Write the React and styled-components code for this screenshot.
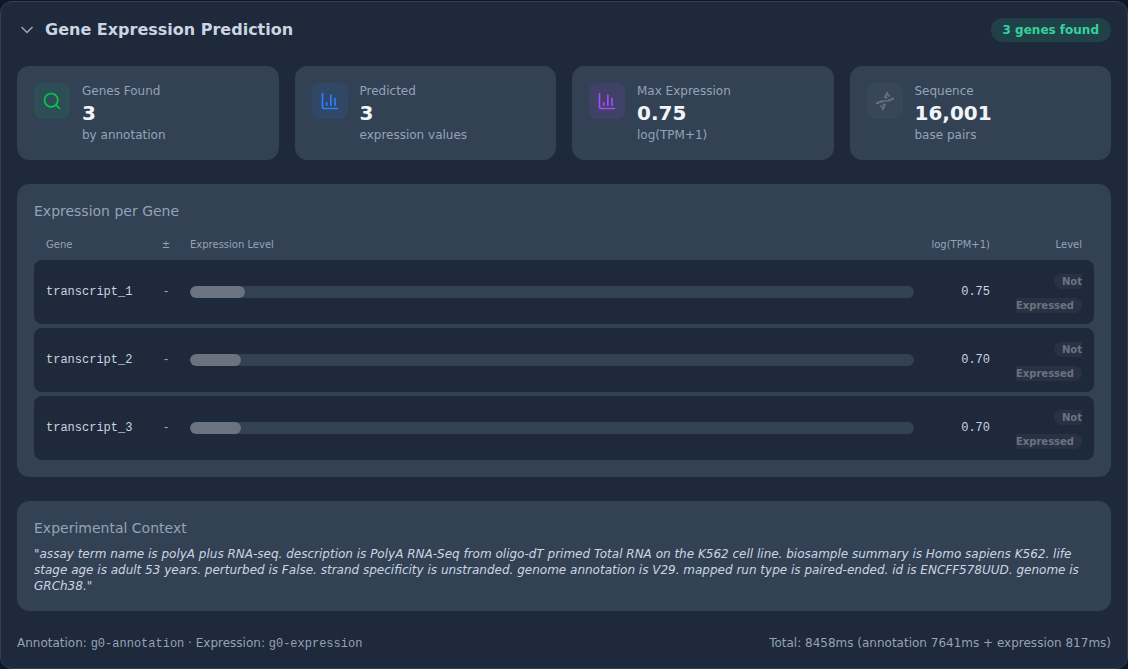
import React, { useState } from "react";
import styled, { createGlobalStyle } from "styled-components";
import { ChartColumn, ChevronDown, Dna, Search } from "lucide-react";

const GlobalStyle = createGlobalStyle`
  * {
    box-sizing: border-box;
  }
  body {
    margin: 0;
    background: #0f172a;
    color: #cbd5e1;
    font-family: "DejaVu Sans", sans-serif;
    font-size: 16px;
    line-height: 24px;
  }
`;

const Panel = styled.main`
  display: flex;
  flex-direction: column;
  gap: 24px;
  margin-top: 1px;
  padding: 16px;
  background: #1e293b;
  border: 1px solid #334155;
  border-radius: 12px;
`;

const Header = styled.header`
  display: flex;
  align-items: center;
  justify-content: space-between;
`;

const Title = styled.h1`
  margin: 0;
  font-size: 16px;
  line-height: 24px;
`;

const Toggle = styled.button`
  display: flex;
  align-items: center;
  gap: 8px;
  padding: 0;
  border: 0;
  background: none;
  color: #cbd5e1;
  font: inherit;
  font-weight: 600;
  cursor: pointer;
`;

const Chevron = styled(ChevronDown)`
  color: #94a3b8;
  transform: ${props => (props.$open ? "none" : "rotate(-90deg)")};
`;

const FoundBadge = styled.span`
  padding: 4px 12px;
  border-radius: 12px;
  background: rgba(52, 211, 153, 0.15);
  color: #34d399;
  font-size: 12px;
  font-weight: 600;
  line-height: 16px;
`;

const Stats = styled.div`
  display: grid;
  grid-template-columns: repeat(4, 1fr);
  gap: 16px;
`;

const Card = styled.section`
  padding: 16px;
  background: #334155;
  border: 1px solid #334155;
  border-radius: 12px;
`;

const StatCard = styled(Card)`
  display: flex;
  align-items: flex-start;
  gap: 12px;
`;

const IconBox = styled.div`
  display: flex;
  padding: 8px;
  border-radius: 8px;
  color: ${props => props.$color};
  background: ${props => props.$background};
`;

const StatText = styled.div`
  color: #94a3b8;
  font-size: 12px;
  line-height: 16px;
`;

const StatValue = styled.div`
  color: #f1f5f9;
  font-size: 20px;
  font-weight: 700;
  line-height: 28px;
`;

const CardTitle = styled.h2`
  margin: 0 0 ${props => props.$space}px;
  color: #94a3b8;
  font-size: 14px;
  font-weight: 400;
  line-height: 20px;
`;

const GeneTable = styled.table`
  display: flex;
  flex-direction: column;
  gap: 4px;
`;

const TableBody = styled.tbody`
  display: flex;
  flex-direction: column;
  gap: 4px;
`;

const Row = styled.tr`
  display: grid;
  grid-template-columns: 96px 24px 1fr 64px 80px;
  align-items: center;
  gap: 12px;
  padding: 8px 12px;
  border-radius: 8px;
  background: #1e293b;
`;

const HeadRow = styled(Row)`
  padding: 4px 12px;
  background: none;
`;

const HeadCell = styled.th`
  padding: 0;
  color: #94a3b8;
  font-size: 10px;
  font-weight: 400;
  line-height: 15px;
  text-align: ${props => props.$align || "left"};
`;

const Cell = styled.td`
  padding: 0;
  text-align: ${props => props.$align || "left"};
`;

const MonoCell = styled(Cell)`
  color: ${props => (props.$muted ? "#94a3b8" : "#cbd5e1")};
  font-family: "Liberation Mono", monospace;
  font-size: 12px;
  line-height: 16px;
`;

const Track = styled.div`
  height: 12px;
  border-radius: 6px;
  background: #334155;
  overflow: hidden;
`;

const Fill = styled.div`
  height: 100%;
  border-radius: 6px;
  background: #6b7280;
`;

const LevelBadge = styled.span`
  padding: 2px 8px;
  border-radius: 8px;
  background: rgba(107, 114, 128, 0.13);
  color: #6b7280;
  font-size: 10px;
  font-weight: 600;
  line-height: 15px;
`;

const Context = styled.p`
  margin: 0;
  font-size: 12px;
  font-style: italic;
  line-height: 16px;
`;

const Footer = styled.footer`
  display: flex;
  justify-content: space-between;
  color: #94a3b8;
  font-size: 12px;
  line-height: 16px;
`;

const Code = styled.span`
  font-family: "Liberation Mono", monospace;
`;

const stats = [
  { label: "Genes Found", value: "3", note: "by annotation", icon: Search, color: "#00c950", background: "rgba(0, 201, 80, 0.1)" },
  { label: "Predicted", value: "3", note: "expression values", icon: ChartColumn, color: "#2b7fff", background: "rgba(43, 127, 255, 0.1)" },
  { label: "Max Expression", value: "0.75", note: "log(TPM+1)", icon: ChartColumn, color: "#ad46ff", background: "rgba(173, 70, 255, 0.1)" },
  { label: "Sequence", value: "16,001", note: "base pairs", icon: Dna, color: "#6a7282", background: "rgba(106, 114, 130, 0.1)" }
];

const genes = [
  { id: "transcript_1", strand: "-", value: 0.754 },
  { id: "transcript_2", strand: "-", value: 0.7 },
  { id: "transcript_3", strand: "-", value: 0.7 }
];

// log(TPM+1) value that fills the whole bar
const MAX_LEVEL = 10;

const Stat = ({ label, value, note, icon: Icon, color, background }) => (
  <StatCard>
    <IconBox $color={color} $background={background}>
      <Icon size={20} />
    </IconBox>
    <StatText>
      <div>{label}</div>
      <StatValue>{value}</StatValue>
      <div>{note}</div>
    </StatText>
  </StatCard>
);

const GeneRow = ({ gene }) => (
  <Row>
    <MonoCell>{gene.id}</MonoCell>
    <MonoCell $align="center" $muted>{gene.strand}</MonoCell>
    <Cell>
      <Track>
        <Fill style={{ width: `${(gene.value / MAX_LEVEL) * 100}%` }} />
      </Track>
    </Cell>
    <MonoCell $align="right">{gene.value.toFixed(2)}</MonoCell>
    <Cell $align="right">
      <LevelBadge>Not Expressed</LevelBadge>
    </Cell>
  </Row>
);

export default function App() {
  const [open, setOpen] = useState(true);

  return (
    <>
      <GlobalStyle />
      <Panel>
        <Header>
          <Title>
            <Toggle aria-expanded={open} onClick={() => setOpen(!open)}>
              <Chevron size={20} $open={open} />
              Gene Expression Prediction
            </Toggle>
          </Title>
          <FoundBadge>3 genes found</FoundBadge>
        </Header>
        {open && (
          <>
            <Stats>
              {stats.map(stat => <Stat key={stat.label} {...stat} />)}
            </Stats>
            <Card>
              <CardTitle $space={12}>Expression per Gene</CardTitle>
              <GeneTable>
                <thead>
                  <HeadRow>
                    <HeadCell>Gene</HeadCell>
                    <HeadCell $align="center">±</HeadCell>
                    <HeadCell>Expression Level</HeadCell>
                    <HeadCell $align="right">log(TPM+1)</HeadCell>
                    <HeadCell $align="right">Level</HeadCell>
                  </HeadRow>
                </thead>
                <TableBody>
                  {genes.map(gene => <GeneRow key={gene.id} gene={gene} />)}
                </TableBody>
              </GeneTable>
            </Card>
            <Card>
              <CardTitle $space={8}>Experimental Context</CardTitle>
              <Context>
                "assay term name is polyA plus RNA-seq. description is PolyA RNA-Seq from oligo-dT primed Total RNA on the K562 cell line. biosample summary is Homo sapiens K562. life stage age is adult 53 years. perturbed is False. strand specificity is unstranded. genome annotation is V29. mapped run type is paired-ended. id is ENCFF578UUD. genome is GRCh38."
              </Context>
            </Card>
            <Footer>
              <div>
                Annotation: <Code>g0-annotation</Code> · Expression: <Code>g0-expression</Code>
              </div>
              <div>Total: 8458ms (annotation 7641ms + expression 817ms)</div>
            </Footer>
          </>
        )}
      </Panel>
    </>
  );
}
